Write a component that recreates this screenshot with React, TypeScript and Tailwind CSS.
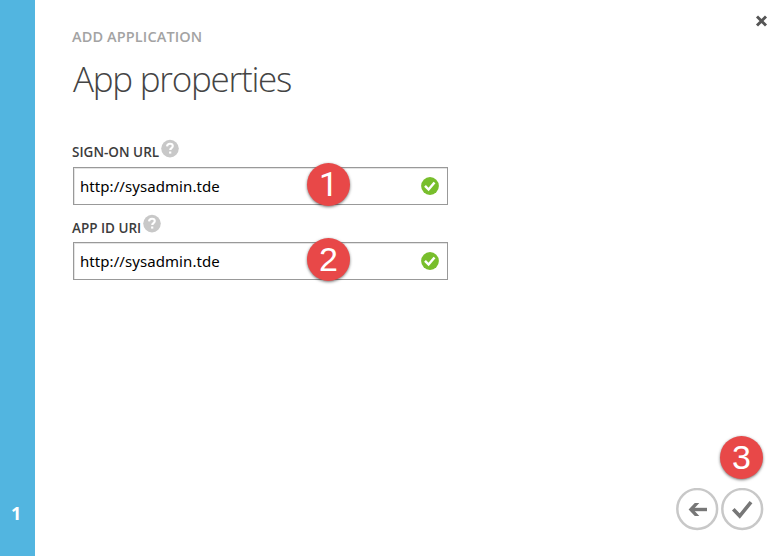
import React from "react";

function HelpIcon() {
  return (
    <svg width="18" height="19" viewBox="0 -0.6 18 19" className="block shrink-0">
      <circle cx="9" cy="9" r="8.8" fill="#c8c8c8" />
      <path d="M6 6.8C6.2 4.9 7.3 4.2 9 4.2c1.7 0 2.8.9 2.8 2.3 0 2-2.6 2-2.6 4" fill="none" stroke="#fff" strokeWidth="2.1" />
      <rect x="8.1" y="11.9" width="2.2" height="2.1" fill="#fff" />
    </svg>
  );
}

function ValidIcon() {
  return (
    <svg width="18" height="18" viewBox="0 0 18 18" className="block shrink-0">
      <circle cx="9" cy="9" r="8.9" fill="#78be2c" />
      <path d="M4 8.8 7.6 12.5 13.5 5.5" fill="none" stroke="#fff" strokeWidth="2.5" />
    </svg>
  );
}

function Badge({ label, className }: { label: string; className: string }) {
  return (
    <div
      className={
        "absolute flex h-[43px] w-[43px] items-center justify-center rounded-full bg-[#e84848] pb-[2px] text-[34px] leading-none text-white shadow-[0_1px_3px_rgba(0,0,0,0.55)] " +
        className
      }
    >
      {label}
    </div>
  );
}

function Field({ label, labelClass, value, badge, badgeFont }: { label: string; labelClass: string; value: string; badge: string; badgeFont: string }) {
  return (
    <div className="h-[75px] w-[375px]">
      <div className="flex h-[28px] items-start">
        <span className={"shrink-0 whitespace-nowrap text-[13.5px] leading-[18px] font-semibold text-[#3c3c3c] " + labelClass}>{label}</span>
        <HelpIcon />
      </div>
      <div className="relative flex h-[38px] items-center justify-between border border-[#999] bg-white pr-[8px] pl-[6px] shadow-[inset_1px_1px_0_#e4e4e4]">
        <span className="font-['Noto_Sans','Open_Sans',sans-serif] text-[15px] leading-[20px] tracking-[0.07px] text-black">{value}</span>
        <ValidIcon />
        <Badge label={badge} className={"top-[-5px] left-[233px] " + badgeFont} />
      </div>
    </div>
  );
}

export default function App() {
  return (
    <div className="flex h-[556px] w-[783px] overflow-hidden bg-white font-['Open_Sans','Noto_Sans',sans-serif]">
      <aside className="flex w-[35px] shrink-0 flex-col justify-end bg-[#52b5e0] pb-[32px] pl-[11px]">
        <span className="text-[18px] leading-[22px] font-bold text-white">1</span>
      </aside>
      <main className="flex flex-1 flex-col pl-[38px]">
        <header className="flex h-[139px] justify-between">
          <div className="pt-[27px]">
            <p className="-ml-px text-[14.5px] leading-[20px] font-semibold tracking-[0.12px] text-[#a3a3a3]">ADD APPLICATION</p>
            <h1 className="mt-[10px] text-[35px] leading-[44px] font-light tracking-[-1.25px] text-[#444]">App properties</h1>
          </div>
          <button className="mt-[15px] mr-[15px] h-[12px] w-[13px]" aria-label="Close">
            <svg width="13" height="12" viewBox="0 0 13 12" className="block">
              <path d="M2 1.5 11 10.5M11 1.5 2 10.5" stroke="#555" strokeWidth="2.9" />
            </svg>
          </button>
        </header>
        <section className="flex-1">
          <Field label="SIGN-ON URL" labelClass="-ml-px mt-[4px] w-[89px] tracking-[0.02px]" value="http://sysadmin.tde" badge="1" badgeFont="font-['Roboto',sans-serif]" />
          <Field label="APP ID URI" labelClass="-ml-px mt-[5px] w-[71px] tracking-[-0.02px]" value="http://sysadmin.tde" badge="2" badgeFont="font-['Liberation_Sans',Arial,sans-serif]" />
        </section>
        <footer className="flex justify-end gap-[2px] pr-[19px] pb-[25px]">
          <button className="h-[43px] w-[43px]" aria-label="Back">
            <svg width="43" height="43" viewBox="0 0 43 43" className="block">
              <circle cx="21.2" cy="21" r="19.9" fill="none" stroke="#c8c8c8" strokeWidth="2.5" />
              <path d="M31 21.5H16" stroke="#777" strokeWidth="3.4" />
              <path d="M18.8 15h4.5L17.3 21.5l6 6.5h-4.5L12.6 21.5z" fill="#777" />
            </svg>
          </button>
          <button className="relative h-[43px] w-[43px]" aria-label="Complete">
            <svg width="43" height="43" viewBox="0 0 43 43" className="block">
              <circle cx="21.2" cy="21" r="19.9" fill="none" stroke="#c8c8c8" strokeWidth="2.5" />
              <path d="M12.3 21.3 18.7 28.1 30 14.1" fill="none" stroke="#777" strokeWidth="3.6" />
            </svg>
            <Badge label="3" className="top-[-52px] left-[-1px] font-['Liberation_Sans',Arial,sans-serif]" />
          </button>
        </footer>
      </main>
    </div>
  );
}
